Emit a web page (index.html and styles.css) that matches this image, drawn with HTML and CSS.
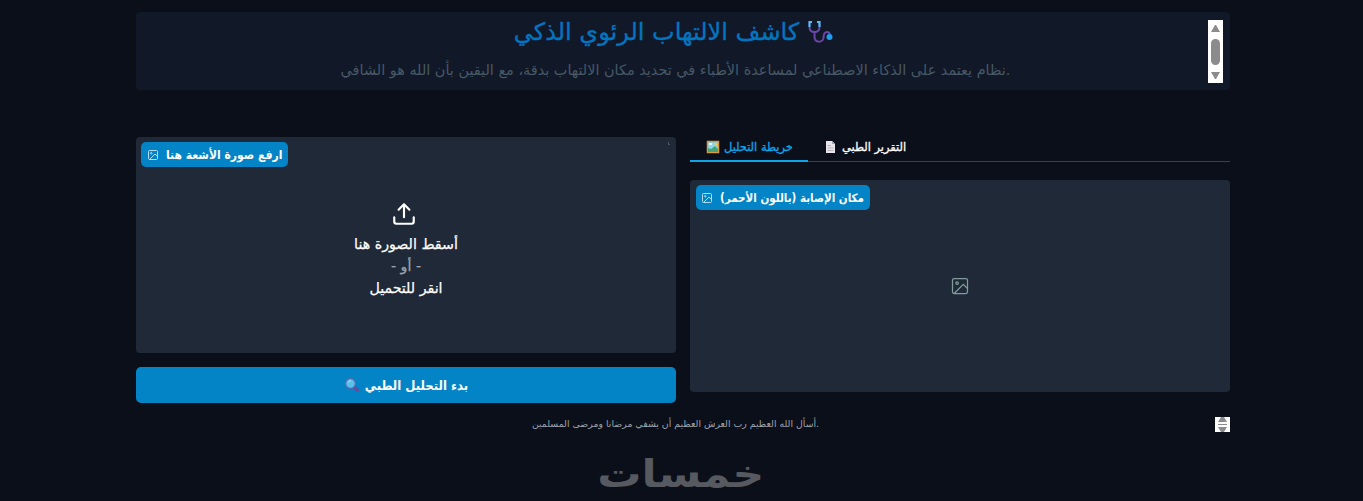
FILE: index.html
```html
<!DOCTYPE html>
<html lang="ar">
<head>
<meta charset="utf-8">
<meta name="viewport" content="width=device-width, initial-scale=1.0">
<title>كاشف الالتهاب الرئوي الذكي</title>
<link rel="stylesheet" href="styles.css">
</head>
<body>

<!-- shared image icon -->
<svg class="defs" width="0" height="0">
  <symbol id="icon-image" viewBox="0 0 24 24">
    <rect x="3" y="3" width="18" height="18" rx="2"/>
    <circle cx="8.5" cy="8.5" r="1.5"/>
    <path d="M21 15l-5-5L5 21"/>
  </symbol>
</svg>

<div class="container">
  <header class="header">
    <div class="header-text">
      <h1><span class="title">كاشف الالتهاب الرئوي الذكي</span>
        <svg class="steth" viewBox="0 0 26 24" width="26" height="24" fill="none" stroke-width="2">
          <path d="M4 2H2.500v5c0 3 2 5 5 5s5-2 5-5V2H11" stroke="#6b45a8"/>
          <path d="M5 2H2.500v5M10 2h2.500v5" stroke="#4cc2f1"/>
          <path d="M7.500 12v5c0 6 8.500 6 9 1 0-4 1-6 3.500-6s3 2 3 4" stroke="#6b45a8"/>
          <circle cx="22.500" cy="17" r="3" fill="#18a0ee"/>
        </svg>
      </h1>
      <p class="subtitle">نظام يعتمد على الذكاء الاصطناعي لمساعدة الأطباء في تحديد مكان الالتهاب بدقة، مع اليقين بأن الله هو الشافي.</p>
    </div>
    <svg class="scroll" width="15" height="63" viewBox="0 0 15 63">
      <rect width="15" height="63" fill="#fff"/>
      <path d="M3 12L7 5h1l4 7zM3 52h9l-4 7H7z" fill="#8b8b8b"/>
      <rect x="3" y="19" width="9" height="26" rx="4.500" fill="#8b8b8b"/>
    </svg>
  </header>

  <main class="row">
    <section class="col">
      <div class="upload">
        <div class="label"><svg class="ico"><use href="#icon-image"/></svg><span>ارفع صورة الأشعة هنا</span></div>
        <span class="corner"></span>
        <svg class="upload-icon" viewBox="0 0 24 24" width="26" height="26">
          <path d="M21 15v4a2 2 0 0 1-2 2H5a2 2 0 0 1-2-2v-4M17 8l-5-5-5 5M12 3v12"/>
        </svg>
        <div class="line">أسقط الصورة هنا</div>
        <div class="line or">- أو -</div>
        <div class="line">انقر للتحميل</div>
      </div>
      <button class="btn">
        <svg width="16" height="16" viewBox="0 0 16 16">
          <path d="M10 10l3.500 3" stroke="#6f459b" stroke-width="3" stroke-linecap="round"/>
          <circle cx="6.500" cy="6.500" r="5" fill="#5bc0ee" stroke="#4f6db0" stroke-width="1.500"/>
          <path d="M4 5.500Q5 3.500 7 3.800" stroke="#a5e2fa" fill="none"/>
        </svg>
        <span>بدء التحليل الطبي</span>
      </button>
    </section>

    <section class="col">
      <nav class="tabs">
        <div class="tab active">
          <svg width="14" height="14" viewBox="0 0 14 14">
            <rect x="1.500" y="1.500" width="11" height="11" fill="#8fd6ed" stroke="#d99b42" stroke-width="1.500"/>
            <path d="M2 12V8l3 1 4-3 3 3v3z" fill="#42a579"/>
            <path d="M3 4h3" stroke="#fff" stroke-width="1.500"/>
            <circle cx="10" cy="4.500" r="1.200" fill="#f9c84b"/>
          </svg>
          <span>خريطة التحليل</span>
        </div>
        <div class="tab">
          <svg width="14" height="14" viewBox="0 0 14 14">
            <path d="M2 1h6l3 3v9H2z" fill="#e8e5eb"/>
            <path d="M8 1v3h3z" fill="#aaa5b3"/>
            <path d="M3.500 5.500H7M3.500 8h6M3.500 10.500h6" stroke="#b5afbc"/>
          </svg>
          <span>التقرير الطبي</span>
        </div>
      </nav>
      <div class="result">
        <div class="label label-result"><svg class="ico"><use href="#icon-image"/></svg><span>مكان الإصابة (باللون الأحمر)</span></div>
        <svg class="empty"><use href="#icon-image"/></svg>
      </div>
    </section>
  </main>

  <footer class="footer">
    <p>أسأل الله العظيم رب العرش العظيم أن يشفي مرضانا ومرضى المسلمين.</p>
    <svg class="spin" width="15" height="15" viewBox="0 0 15 15">
      <rect width="15" height="15" fill="#fff"/>
      <path d="M3 5l3-5h3l3 5zM3 10h9l-3 5H6zM3 7h9v1H3z" fill="#8b8b8b"/>
    </svg>
  </footer>
  <div class="brand">خمسات</div>
</div>

</body>
</html>
```
FILE: styles.css
```css
* {box-sizing: border-box;}

body {
  margin: 0;
  height: 501px;
  overflow: hidden;
  background: #0b0f19;
  color: #fff;
  font-family: "DejaVu Sans", sans-serif;
}

h1, p {
  margin: 0;
  font-weight: normal;
}

svg {
  flex-shrink: 0;
}

.defs {
  position: absolute;
}

.container {
  width: 1094px;
  margin: 12px 0 0 136px;
}

.header {
  display: flex;
  height: 78px;
  padding: 8px 7px 7px 0;
  background: #111827;
  border-radius: 4px;
}

.header-text {
  flex: 1;
  display: flex;
  flex-direction: column;
  align-items: center;
  padding-left: 7px;
}

h1 {
  display: flex;
  gap: 8px;
  height: 37px;
  padding-right: 4px;
  font-size: 24px;
  line-height: 24px;
}

.title {
  color: #0275c2;
  -webkit-text-stroke: 0.3px #0275c2;
}

.subtitle {
  color: #475966;
  font-size: 14.43px;
  line-height: 26px;
  white-space: nowrap;
}

.row {
  display: flex;
  gap: 14px;
  margin-top: 47px;
}

.col {
  width: 540px;
}

.upload, .result {
  position: relative;
  background: #1f2937;
  border-radius: 4px;
}

.upload {
  display: flex;
  flex-direction: column;
  align-items: center;
  height: 216px;
  padding-top: 64px;
}

.label {
  position: absolute;
  top: 5px;
  left: 5px;
  display: flex;
  align-items: center;
  gap: 7px;
  height: 25px;
  padding: 0 6px;
  background: #0284c7;
  border-radius: 5px;
  font: bold 12px "DejaVu Sans Condensed", "DejaVu Sans", sans-serif;
  white-space: nowrap;
}

.label-result {
  left: 6px;
  padding-left: 5px;
  font-size: 11.5px;
}

.ico, .empty {
  width: 12px;
  height: 12px;
  fill: none;
  stroke: #b3dcf2;
  stroke-width: 2;
}

.corner {
  position: absolute;
  top: 5px;
  right: 6px;
  width: 2px;
  height: 3px;
  border-left: 1px solid #4b5563;
  border-bottom: 1px solid #4b5563;
}

.upload-icon {
  fill: none;
  stroke: #fff;
  stroke-width: 2;
  stroke-linecap: round;
  stroke-linejoin: round;
  margin: 0 4px 7px 0;
}

.line {
  height: 22px;
  font-size: 14.2px;
  line-height: 20px;
  -webkit-text-stroke: 0.25px;
}

.or {
  color: #9ca3af;
}

.btn {
  display: flex;
  align-items: center;
  justify-content: center;
  gap: 5px;
  width: 100%;
  height: 36px;
  margin-top: 14px;
  border: 0;
  border-radius: 5px;
  background: #0284c7;
  color: #fff;
  font: bold 13px "DejaVu Sans Condensed", "DejaVu Sans", sans-serif;
}

.tabs {
  display: flex;
  height: 25px;
  border-bottom: 1px solid #374151;
}

.tab {
  display: flex;
  align-items: center;
  gap: 4px;
  height: 25px;
  padding: 0 14px 5px 16px;
  font-size: 11.4px;
  white-space: nowrap;
  -webkit-text-stroke: 0.3px;
}

.active {
  width: 118px;
  padding-bottom: 3px;
  color: #0ea5e9;
  border-bottom: 2px solid #0ea5e9;
}

.result {
  display: flex;
  align-items: center;
  justify-content: center;
  height: 212px;
  margin-top: 18px;
}

.empty {
  width: 20px;
  height: 20px;
  stroke: #829c9b;
  stroke-width: 1.5;
}

.footer {
  display: flex;
  height: 15px;
  margin-top: 14px;
}

.footer p {
  flex: 1;
  text-align: center;
  color: #9ca3af;
  font-size: 9.37px;
  line-height: 14px;
}

.brand {
  margin-top: 20px;
  padding-right: 4px;
  text-align: center;
  color: #56595f;
  font-size: 38px;
  line-height: 44px;
  font-weight: bold;
  transform: scaleX(1.16);
}
```
